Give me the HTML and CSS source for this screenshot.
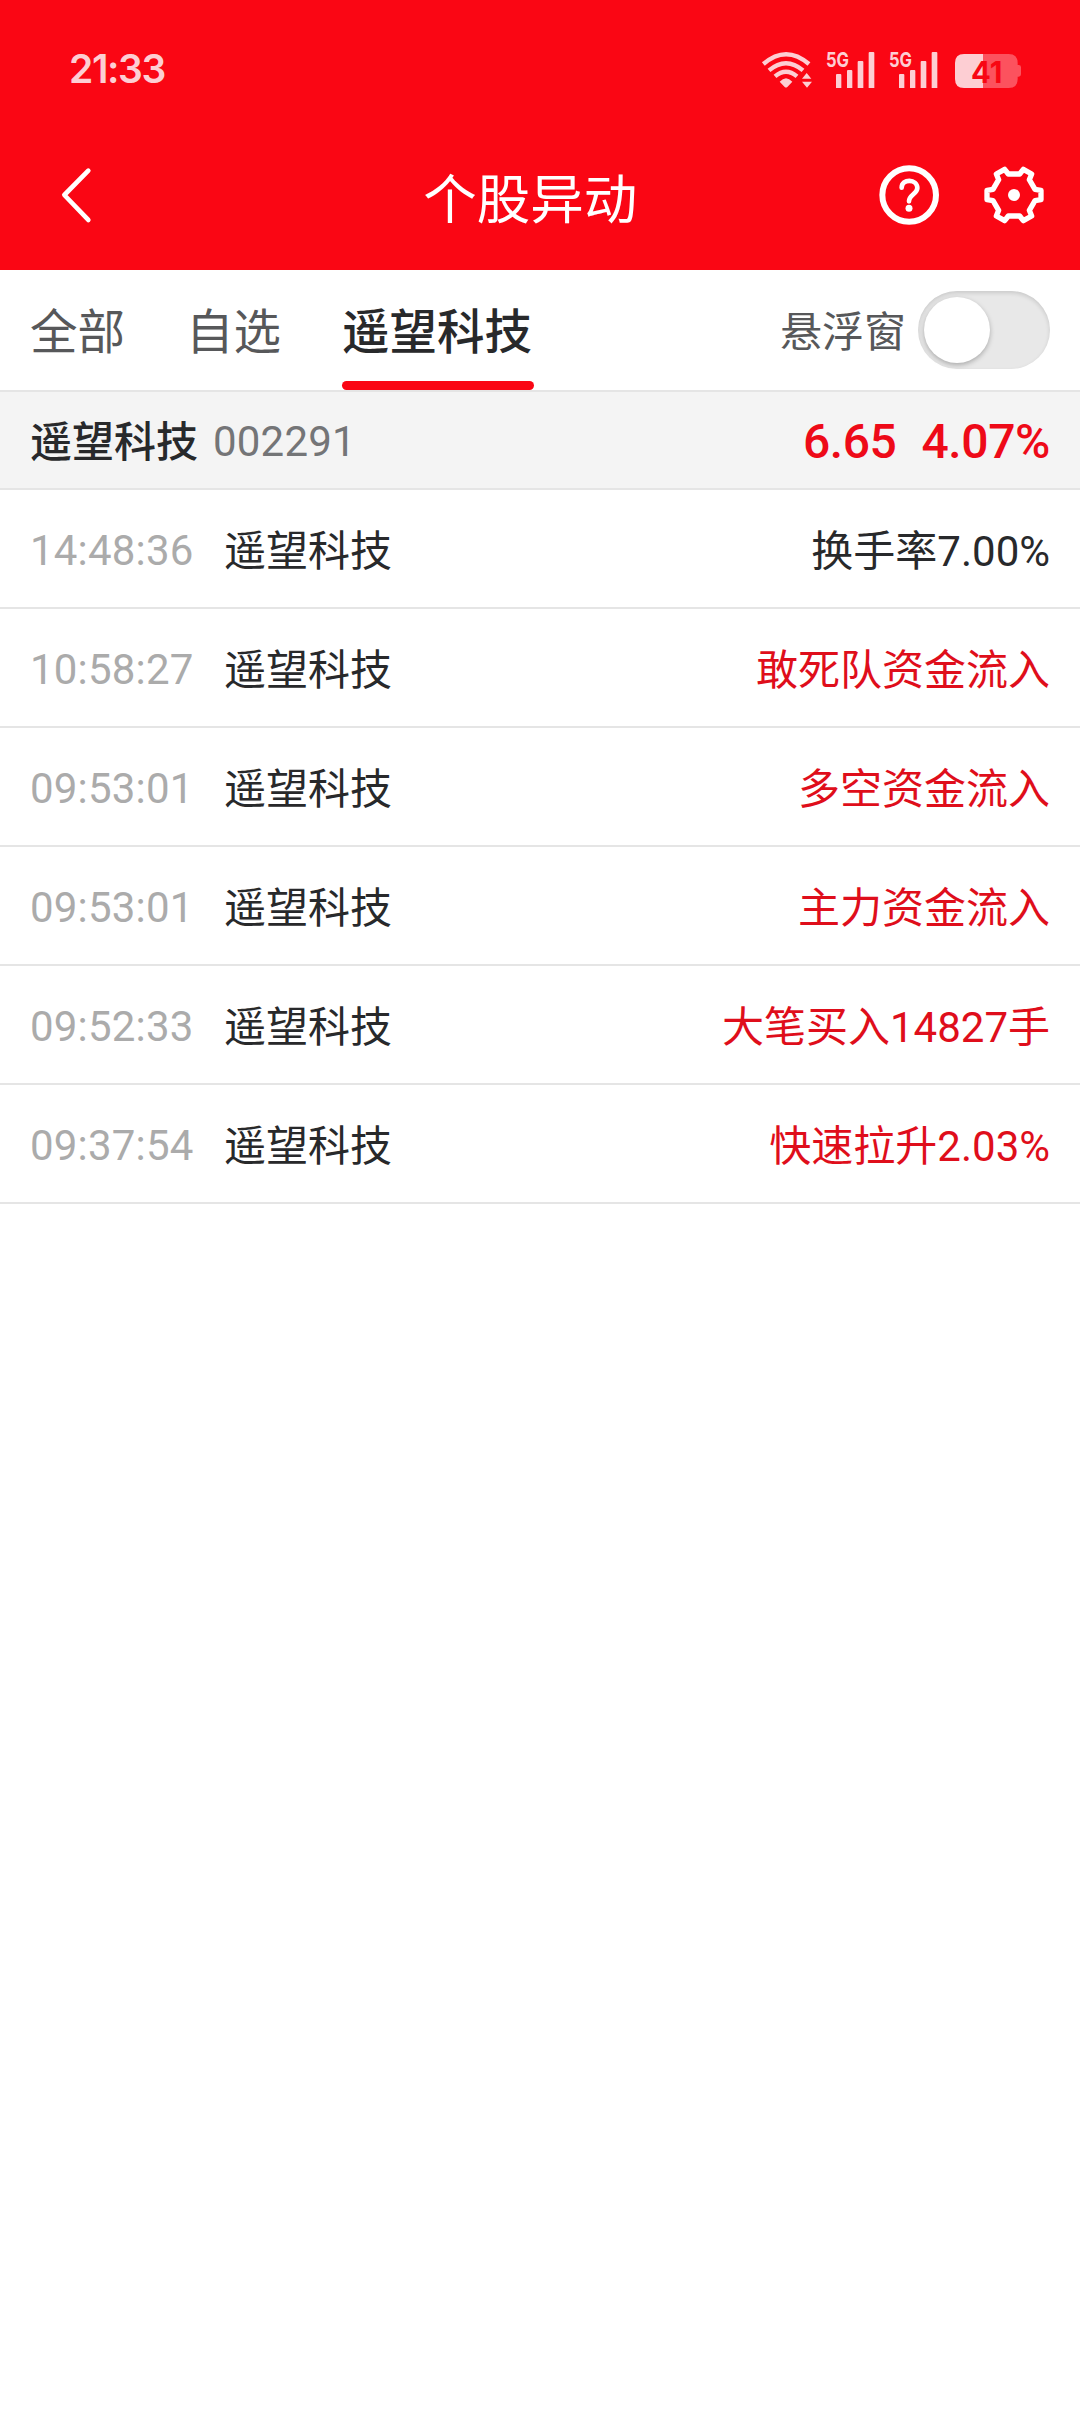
FILE: index.html
```html
<!DOCTYPE html>
<html lang="zh-CN">
<head>
<meta charset="utf-8">
<title>个股异动</title>
<link rel="stylesheet" href="styles.css">
</head>
<body>
<header class="header">
  <div class="status">
    <span class="clock">21:33</span>
    <div class="status-icons">
      <svg class="wifi" viewBox="66 60 156 114" width="52" height="38">
        <g fill="none" stroke="currentColor" stroke-width="13">
          <path d="M73 102Q141 43 210 102"/>
          <path d="M90 121Q141 78 192 121"/>
          <path d="M108 139Q141 111 174 139"/>
        </g>
        <path fill="currentColor" d="M122 155Q141 134 160 155L145 171Q141 174 137 171ZM203 129L217 146H189ZM189 155H219L204 173Z"/>
      </svg>
      <svg class="signal" viewBox="260 30 147 144" width="49" height="48">
        <text x="260" y="110" textLength="69" lengthAdjust="spacingAndGlyphs">5G</text>
        <path fill="currentColor" d="M290 135q0-3 3-3h10q3 0 3 3v39h-16zM323 123q0-3 3-3h10q3 0 3 3v51h-16zM355 96q0-3 3-3h11q3 0 3 3v78h-17zM388 69q0-3 3-3h11q3 0 3 3v105h-17z"/>
      </svg>
      <svg class="signal" viewBox="260 30 147 144" width="49" height="48">
        <text x="260" y="110" textLength="69" lengthAdjust="spacingAndGlyphs">5G</text>
        <path fill="currentColor" d="M290 135q0-3 3-3h10q3 0 3 3v39h-16zM323 123q0-3 3-3h10q3 0 3 3v51h-16zM355 96q0-3 3-3h11q3 0 3 3v78h-17zM388 69q0-3 3-3h11q3 0 3 3v105h-17z"/>
      </svg>
      <svg class="battery" viewBox="645 60 198 114" width="66" height="38">
        <path fill="#fdced3" d="M729 72H672Q645 72 645 99V147Q645 174 672 174H729Z"/>
        <path fill="#fc525e" d="M729 72H806Q833 72 833 99V105H836Q843 105 843 112V133Q843 140 836 140H833V147Q833 174 806 174H729Z"/>
        <text x="693" y="158" textLength="94" lengthAdjust="spacingAndGlyphs">41</text>
      </svg>
    </div>
  </div>
  <div class="navbar">
    <svg class="back" viewBox="180 405 100 180" width="33.3" height="60">
      <path d="M265 422L193 495L265 570"/>
    </svg>
    <h1 class="title">个股异动</h1>
    <div class="actions">
      <svg viewBox="116 75 180 180" width="60" height="60">
        <circle cx="206.500" cy="165" r="80.500" fill="none" stroke="#fff" stroke-width="18"/>
        <path d="M184 143C184 115 231 116 231 144C231 162 206 164 206 184" fill="none" stroke="#fff" stroke-width="14" stroke-linecap="round"/>
        <circle cx="206" cy="205" r="10.500" fill="#fff"/>
      </svg>
      <svg viewBox="-90 -90 180 180" width="60" height="60">
        <path d="M-17-63H17L28-77L53-63L46-46L63-17L81-14V14L63 17L46 46L53 63L28 77L17 63H-17L-28 77L-53 63L-46 46L-63 17L-81 14V-14L-63-17L-46-46L-53-63L-28-77Z" fill="none" stroke="#fff" stroke-width="16" stroke-linejoin="round"/>
        <circle r="18" fill="#fff"/>
      </svg>
    </div>
  </div>
</header>

<nav class="tabs">
  <a class="tab">全部</a>
  <a class="tab">自选</a>
  <a class="tab active"><span>遥望科技</span></a>
  <div class="float"><span>悬浮窗</span><i class="switch"><b></b></i></div>
</nav>

<section class="stock">
  <span class="stock-name">遥望科技</span>
  <span class="stock-code">002291</span>
  <span class="price">6.65</span>
  <span class="change">4.07%</span>
</section>

<ul class="list">
  <li><time>14:48:36</time><span>遥望科技</span><em class="plain">换手率7.00%</em></li>
  <li><time>10:58:27</time><span>遥望科技</span><em>敢死队资金流入</em></li>
  <li><time>09:53:01</time><span>遥望科技</span><em>多空资金流入</em></li>
  <li><time>09:53:01</time><span>遥望科技</span><em>主力资金流入</em></li>
  <li><time>09:52:33</time><span>遥望科技</span><em>大笔买入14827手</em></li>
  <li><time>09:37:54</time><span>遥望科技</span><em>快速拉升2.03%</em></li>
</ul>
</body>
</html>
```
FILE: styles.css
```css
* { box-sizing: border-box; }
body {
  margin: 0;
  min-height: 2412px;
  background: #fff;
  color: #28292b;
  font-family: Roboto, "Noto Sans CJK SC", sans-serif;
  font-size: 42px;
  white-space: nowrap;
}
svg { display: block; flex: none; }

/* Header */
.header { height: 270px; background: #fa0614; color: #fff; }
.status {
  display: flex;
  justify-content: space-between;
  height: 120px;
  padding: 40px 59px 0 69px;
  color: #fdced3;
}
.clock { padding-top: 10px; font: 600 39px/38px Inter, sans-serif; letter-spacing: -1.4px; }
.status-icons { display: flex; align-items: flex-end; height: 48px; }
.wifi { margin-right: 13px; }
.signal { margin-right: 14px; }
.signal + .battery { margin-left: 3px; }
.signal text { font: 700 62px Inter, sans-serif; fill: currentColor; }
.battery text { font: 700 89px Inter, sans-serif; fill: #f80613; }
.navbar {
  display: flex;
  align-items: flex-start;
  justify-content: space-between;
  padding: 45px 36px 0 60px;
}
.back { fill: none; stroke: #fff; stroke-width: 14; stroke-linecap: round; stroke-linejoin: round; }
.title { margin: 6px 0 0 330px; font-size: 53.500px; line-height: 60px; font-weight: 400; }
.actions { display: flex; gap: 45px; margin-left: auto; }

/* Tabs */
.tabs {
  display: flex;
  height: 122px;
  padding-left: 30px;
  border-bottom: 2px solid #e5e5e5;
  font-size: 48px;
  line-height: 127px;
}
.tab { width: 96px; margin-right: 60px; color: #57585a; font-size: 47.500px; }
.tab.active {
  display: flex;
  flex-direction: column;
  width: 192px;
  margin: 0;
  color: #28292b;
  font-weight: 500;
}
.tab.active span { height: 111px; }
.tab.active::after { content: ""; height: 9px; border-radius: 4.500px; background: #fa0614; }
.float {
  display: flex;
  align-items: center;
  gap: 12px;
  margin: 0 30px 0 auto;
  height: 120px;
  color: #57585a;
  font-size: 42px;
}
.float span { padding-top: 4px; }
.switch {
  width: 132px;
  height: 78px;
  padding: 6px;
  border-radius: 39px;
  background: #e8e8e8;
  box-shadow: inset 0 2px 4px #0002;
}
.switch b {
  display: block;
  width: 66px;
  height: 66px;
  border-radius: 50%;
  background: #fff;
  box-shadow: 0 2px 5px #0004;
}

/* Stock summary */
.stock {
  display: flex;
  height: 98px;
  padding: 0 30px;
  border-bottom: 2px solid #e5e5e5;
  background: #f4f4f4;
  line-height: 99px;
}
.stock-name { font-weight: 500; line-height: 101px; }
.stock-code { margin-left: 15px; color: #747577; letter-spacing: .2px; }
.price, .change { color: #ee0a18; font-size: 48px; font-weight: 500; letter-spacing: -.4px; }
.price { margin-left: auto; }
.change { margin-left: 25px; }

/* Event list */
.list { margin: 0; padding: 0; list-style: none; }
.list li {
  display: flex;
  height: 119px;
  padding: 0 30px;
  border-bottom: 2px solid #e5e5e5;
  line-height: 123px;
}
.list time { width: 194px; color: #ababab; letter-spacing: .2px; line-height: 121px; }
.list em { margin-left: auto; font-style: normal; color: #df0e1b; }
.list .plain { color: #28292b; }
```
